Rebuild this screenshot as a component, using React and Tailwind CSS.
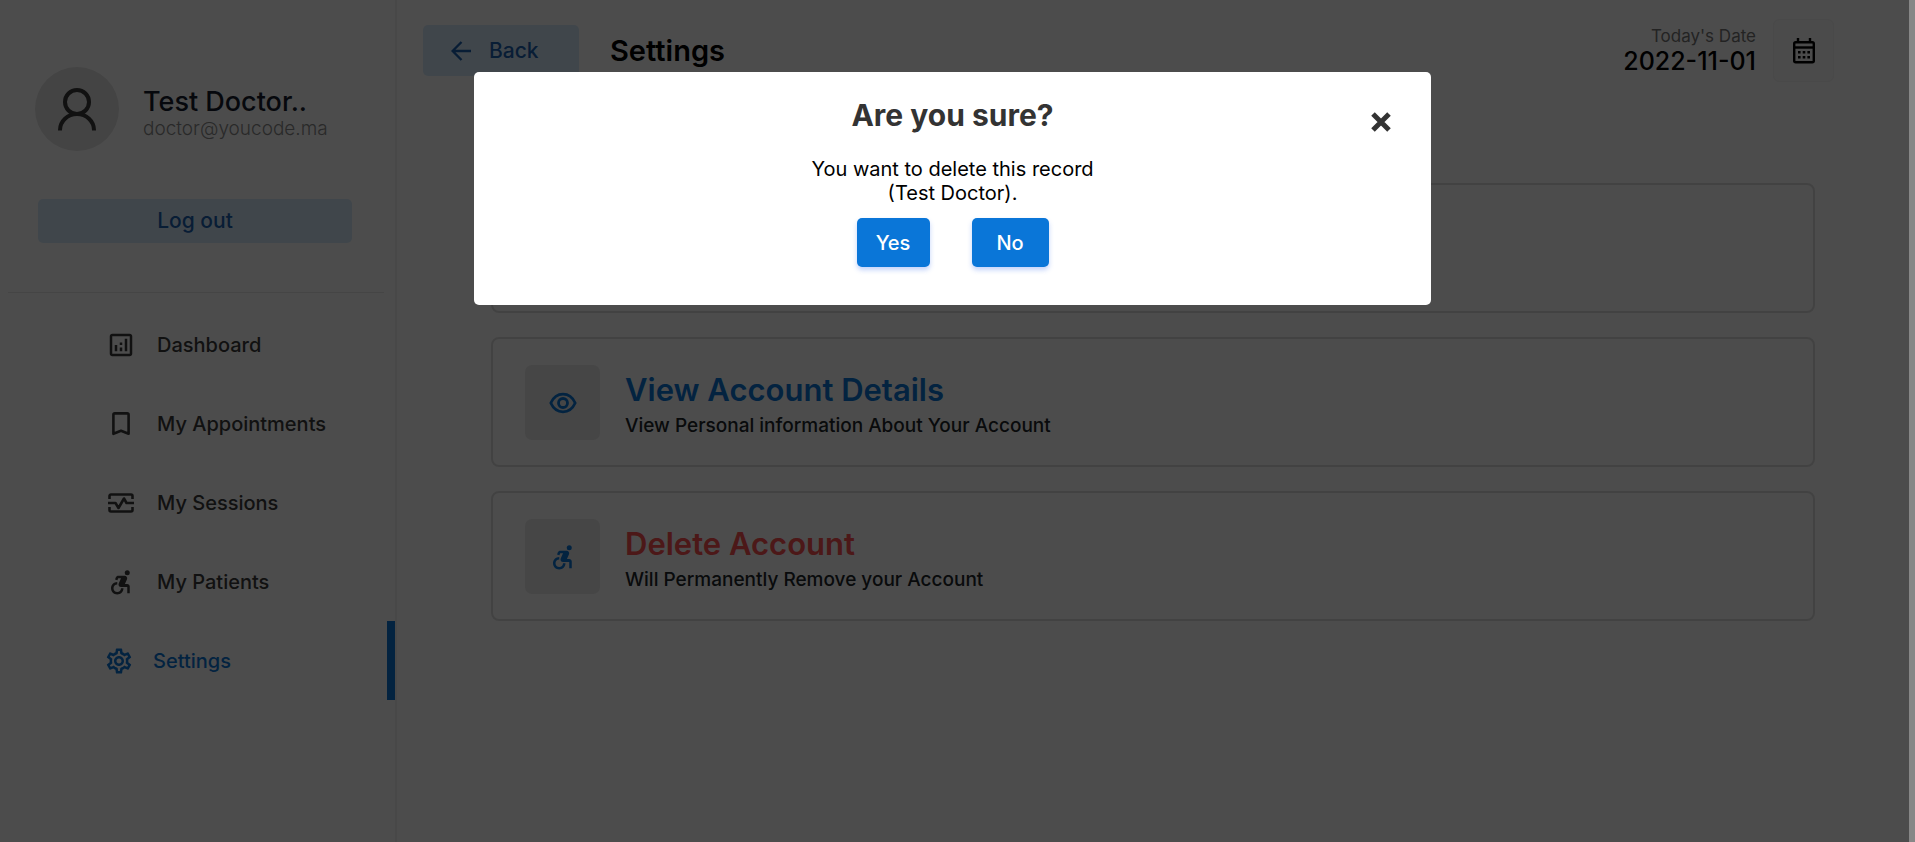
import React from "react";
import {
  MdOutlineAnalytics,
  MdAccessibleForward,
  MdOutlineSettings,
} from "react-icons/md";

function UserIcon() {
  return (
    <svg viewBox="0 0 38 44" className="h-[44px] w-[38px]" fill="none" stroke="#3a3a3a" strokeWidth="4" aria-hidden="true">
      <circle cx="19" cy="15" r="12" />
      <path d="M2 43.500V43a17 16 0 0 1 34 0v.5" />
    </svg>
  );
}

function BookmarkIcon() {
  return (
    <svg viewBox="0 0 18 24" className="h-[24px] w-[18px]" fill="none" stroke="currentColor" strokeWidth="2.600" strokeLinejoin="round" aria-hidden="true">
      <path d="M1.400 2.800A1.400 1.400 0 0 1 2.800 1.400h12.400a1.400 1.400 0 0 1 1.400 1.400v19L9 18.700l-7.600 3.100z" />
    </svg>
  );
}

function SessionIcon() {
  return (
    <svg viewBox="0 0 26 20" className="h-[20px] w-[26px]" fill="none" stroke="currentColor" strokeWidth="2.600" strokeLinejoin="round" aria-hidden="true">
      <path d="M1.500 6V3a1.500 1.500 0 0 1 1.500-1.500h20A1.500 1.500 0 0 1 24.500 3v3" />
      <path d="M1.500 14v3A1.500 1.500 0 0 0 3 18.500h20a1.500 1.500 0 0 0 1.500-1.500v-3" />
      <path d="M0 10h7.500l3 5 5.500-9.500 2.500 4.500H26" />
    </svg>
  );
}

function EyeIcon() {
  return (
    <svg viewBox="0 0 28 22" className="h-[22px] w-[28px]" fill="none" stroke="currentColor" strokeWidth="2.800" strokeLinejoin="round" aria-hidden="true">
      <path d="M1.800 11C4.300 5.500 8.800 2.200 14 2.200S23.700 5.500 26.200 11C23.700 16.500 19.200 19.800 14 19.800S4.300 16.500 1.800 11z" />
      <circle cx="14" cy="11" r="4.500" />
    </svg>
  );
}

function CalendarIcon() {
  return (
    <svg viewBox="0 0 24 26" className="h-[26px] w-[24px]" fill="none" stroke="#000" aria-hidden="true">
      <rect x="2.200" y="4.200" width="19.600" height="20" rx="1.500" strokeWidth="2.400" />
      <path d="M2 9.500h20" strokeWidth="2.400" />
      <path d="M6 0v4M18 0v4" strokeWidth="2.400" />
      <path d="M6 14.200h12M6 19.200h12" strokeWidth="2.600" strokeDasharray="2.600 2.100" />
    </svg>
  );
}

function BackArrow() {
  return (
    <svg viewBox="0 0 20 20" className="h-[20px] w-[20px]" fill="none" stroke="currentColor" strokeWidth="2.400" aria-hidden="true">
      <path d="M10.500 1 1.600 10l8.900 9M1.600 10H20" />
    </svg>
  );
}

const menu = [
  { label: "Dashboard", icon: <MdOutlineAnalytics size={30} /> },
  { label: "My Appointments", icon: <BookmarkIcon /> },
  { label: "My Sessions", icon: <SessionIcon /> },
  { label: "My Patients", icon: <MdAccessibleForward size={30} /> },
  { label: "Settings", icon: <MdOutlineSettings size={30} />, active: true },
];

function Sidebar() {
  return (
    <aside className="w-[397px] shrink-0 border-r-2 border-[#f0f0f0]">
      <div className="flex items-center gap-[24px] pt-[67px] pl-[35px]">
        <div className="flex size-[84px] shrink-0 items-center justify-center rounded-full bg-[#e4e4e4]">
          <UserIcon />
        </div>
        <div className="pt-[10px]">
          <p className="text-[27px] leading-[30px] font-medium text-[#161c2d]">Test Doctor..</p>
          <p className="text-[19px] leading-[24px] font-light text-[#8b8b8b]">doctor@youcode.ma</p>
        </div>
      </div>
      <div className="pt-[48px] pr-[43px] pl-[38px]">
        <button type="button" className="h-[44px] w-full rounded-[5px] bg-[#d8ebfa] text-[21px] font-medium text-[#1b62b3]">
          Log out
        </button>
      </div>
      <hr className="mt-[49px] mr-[11px] ml-[8px] border-[#e8e8e8]" />
      <nav className="mt-[12px]">
        {menu.map((item) => (
          <a
            key={item.label}
            href="#"
            className={
              item.active
                ? "flex h-[79px] items-center gap-[18px] border-r-8 border-[#0a76d8] pl-[103px] text-[20px] font-medium text-[#0a76d8]"
                : "flex h-[79px] items-center gap-[20px] pl-[105px] text-[20px] font-medium text-[#3b3b3b]"
            }
          >
            <span className="flex w-[32px] justify-center">{item.icon}</span>
            {item.label}
          </a>
        ))}
      </nav>
    </aside>
  );
}

function Header() {
  return (
    <header className="flex items-start">
      <button type="button" className="mt-[25px] ml-[26px] flex h-[51px] w-[156px] items-center gap-[18px] rounded-[5px] bg-[#d8ebfa] pl-[28px] text-[21px] font-medium text-[#1b62b3]">
        <BackArrow />
        Back
      </button>
      <h1 className="mt-[34px] ml-[31px] text-[29px] leading-[34px] font-semibold text-black">Settings</h1>
      <div className="mt-[25px] ml-auto text-right">
        <p className="text-[17px] leading-[22px] text-[#777777]">Today's Date</p>
        <p className="text-[25px] leading-[28px] font-medium text-black">2022-11-01</p>
      </div>
      <button type="button" aria-label="Calendar" className="mt-[19px] mr-[75px] ml-[17px] flex h-[63px] w-[61px] items-center justify-center rounded-[6px] border border-[#f4f4f4] bg-[#fafafa]">
        <CalendarIcon />
      </button>
    </header>
  );
}

function Card({ icon, title, text, danger }) {
  return (
    <a href="#" className="flex h-[130px] items-start gap-[25px] rounded-[8px] border-2 border-[#dedede] pt-[26px] pl-[32px]">
      <span className="flex size-[75px] shrink-0 items-center justify-center rounded-[7px] bg-[#ebebeb] text-[#0a76d8]">{icon}</span>
      <span className="flex flex-col pt-[4px]">
        <span className={danger ? "text-[31px] leading-[42px] font-semibold text-[#ff5050]" : "text-[31px] leading-[42px] font-semibold text-[#0a76d8]"}>
          {title}
        </span>
        <span className="text-[19px] leading-[30px] font-medium text-[#212529]">{text}</span>
      </span>
    </a>
  );
}

function Dialog() {
  return (
    <div className="fixed inset-y-0 right-[6px] left-0 bg-black/70 pr-[4px]">
      <div role="dialog" aria-modal="true" aria-labelledby="dialog-title" className="relative mx-auto mt-[72px] flex w-[50vw] flex-col items-center rounded-[5px] bg-white pt-[25px] pb-[38px]">
        <h2 id="dialog-title" className="text-[30px] leading-[36px] font-bold text-[#333333]">Are you sure?</h2>
        <button type="button" aria-label="Close" className="absolute top-[40px] right-[40px] text-[#333333]">
          <svg viewBox="0 0 20 20" className="size-[20px]" stroke="currentColor" strokeWidth="5" aria-hidden="true">
            <path d="M2 2 18 18M18 2 2 18" />
          </svg>
        </button>
        <p className="mt-[24px] text-center text-[20px] leading-[24px] text-black">
          You want to delete this record
          <br />
          (Test Doctor).
        </p>
        <div className="mt-[13px] flex gap-[42px]">
          <button type="button" className="h-[49px] w-[73px] rounded-[5px] bg-[#0a76d8] text-[20px] font-medium text-white shadow-[0_3px_5px_rgba(57,108,240,0.3)]">
            Yes
          </button>
          <button type="button" className="h-[49px] w-[77px] rounded-[5px] bg-[#0a76d8] text-[20px] font-medium text-white shadow-[0_3px_5px_rgba(57,108,240,0.3)]">
            No
          </button>
        </div>
      </div>
    </div>
  );
}

export default function App() {
  return (
    <div className="flex min-h-screen bg-white font-['Inter','Liberation_Sans',sans-serif]">
      <Sidebar />
      <main className="min-w-0 grow">
        <Header />
        <section className="mt-[101px] mr-[94px] ml-[94px] flex flex-col gap-[24px]">
          <div className="h-[130px] rounded-[8px] border-2 border-[#dedede]" />
          <Card
            icon={<EyeIcon />}
            title="View Account Details"
            text="View Personal information About Your Account"
          />
          <Card
            icon={<MdAccessibleForward size={30} />}
            title="Delete Account"
            text="Will Permanently Remove your Account"
            danger
          />
        </section>
      </main>
      <div className="w-[6px] shrink-0 bg-[#878787]" />
      <Dialog />
    </div>
  );
}
